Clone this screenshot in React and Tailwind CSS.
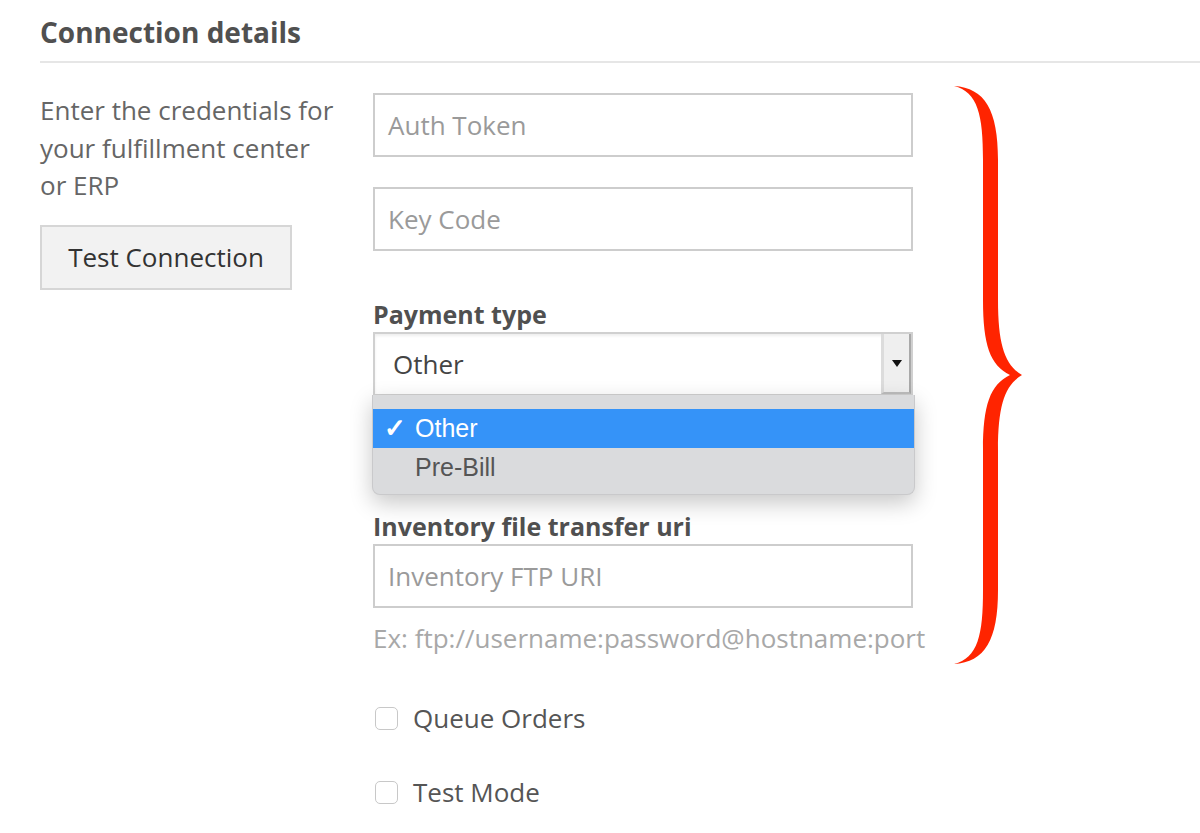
import React from 'react'

const font = { fontFamily: '"Open Sans", "Noto Sans", sans-serif' }

const Brace = () => (
  <svg
    className="absolute left-[940px] top-[80px] w-[100px] h-[600px]"
    viewBox="940 80 100 600"
  >
    <path
      fill="#ff2400"
      d="M954 86 C985 88, 998 110, 998 160 L998 300 C998 345, 1005 365, 1022 375 C1005 385, 998 405, 998 450 L998 590 C998 640, 985 662, 954 664 C978 658, 983 635, 983 590 L983 450 C983 405, 990 385, 1010 375 C990 365, 983 345, 983 300 L983 160 C983 115, 978 92, 954 86 Z"
    />
  </svg>
)

const TextInput = ({ placeholder }) => (
  <div className="h-[64px] w-[540px] border-2 border-[#cdcdcd] bg-white flex items-center px-[13px] text-[26px] text-[#9a9a9a]">
    {placeholder}
  </div>
)

const Checkbox = ({ label }) => (
  <div className="flex items-center gap-[15px] h-[32px] ml-[2px]">
    <span className="w-[23px] h-[23px] rounded-[5px] border border-[#c8c8c8] bg-white" />
    <span className="text-[26px] text-[#555]">{label}</span>
  </div>
)

const App = () => {
  return (
    <div className="relative w-[1200px] h-[833px] bg-white overflow-hidden" style={font}>
      {/* Heading */}
      <div className="pl-[40px] pt-[16px]">
        <h2 className="text-[28px] leading-[32px] font-bold text-[#505050]">Connection details</h2>
        <div className="mt-[13px] border-t-2 border-[#e6e6e6]" />
      </div>

      <div className="flex pl-[40px] pt-[30px]">
        {/* Left column */}
        <div className="w-[333px] shrink-0">
          <p className="text-[26px] leading-[37.5px] text-[#666] -mt-[1px]">
            Enter the credentials for
            <br />
            your fulfillment center
            <br />
            or ERP
          </p>
          <button className="mt-[20px] w-[252px] h-[65px] bg-[#f2f2f2] border-2 border-[#d6d6d6] text-[26px] text-[#333]">
            Test Connection
          </button>
        </div>

        {/* Right column */}
        <div className="flex flex-col">
          <TextInput placeholder="Auth Token" />
          <div className="mt-[30px]">
            <TextInput placeholder="Key Code" />
          </div>

          <label className="mt-[47px] text-[25px] leading-[32px] font-bold text-[#505050]">Payment type</label>
          <div className="relative mt-[2px] w-[540px]">
            <div className="h-[64px] border-2 border-[#d0d0d0] bg-white shadow-[inset_0_2px_3px_rgba(0,0,0,0.07)] flex items-center justify-between pl-[18px]">
              <span className="text-[26px] text-[#444]">Other</span>
              <div className="h-[60px] w-[30px] bg-[#efefef] border-l-[3px] border-l-[#dcdcdc] border-r-2 border-r-[#a9a9a9] border-b-2 border-b-[#bdbdbd] flex items-center justify-center">
                <svg width="10" height="7" viewBox="0 0 10 7">
                  <path d="M0 0 L10 0 L5 7 Z" fill="#111" />
                </svg>
              </div>
            </div>
            {/* Open dropdown */}
            <div
              className="absolute left-[-1px] right-[-2px] top-[63px] z-10 bg-[#dadbdd] rounded-b-[8px] pt-[14px] pb-[7px] shadow-[0_8px_22px_rgba(0,0,0,0.22)] border-x border-b border-[#c9c9cb]"
              style={{ fontFamily: '"Liberation Sans", Arial, sans-serif' }}
            >
              <div className="h-[39px] bg-[#3593f8] text-white text-[25px] flex items-center">
                <span className="w-[42px] pl-[11px] text-[26px] font-bold">✓</span>
                <span>Other</span>
              </div>
              <div className="h-[39px] text-[#555] text-[25px] flex items-center pl-[42px]">Pre-Bill</div>
            </div>
          </div>

          <label className="mt-[114px] text-[25px] leading-[32px] font-bold text-[#505050]">
            Inventory file transfer uri
          </label>
          <div className="mt-[2px]">
            <TextInput placeholder="Inventory FTP URI" />
          </div>
          <p className="mt-[14px] text-[26px] leading-[32px] text-[#a8a8a8] whitespace-nowrap">
            Ex: ftp://username:password@hostname:port
          </p>

          <div className="mt-[48px]">
            <Checkbox label="Queue Orders" />
          </div>
          <div className="mt-[42px]">
            <Checkbox label="Test Mode" />
          </div>
        </div>
      </div>

      <Brace />
    </div>
  )
}

export default App
